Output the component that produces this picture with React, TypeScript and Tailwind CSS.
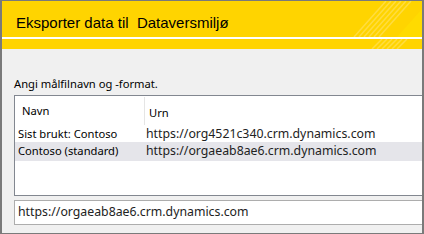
export default function App() {
  return (
    <div className="h-[234px] w-[424px] overflow-hidden bg-[#f0f0f0] font-['Noto_Sans',sans-serif]">
      <div className="flex h-full w-full flex-col border-x-2 border-y border-[#7a7a7a]">
        <div className="relative h-[48px] shrink-0 bg-[#ffd400]">
          <svg className="absolute inset-0" width="420" height="48" viewBox="0 0 420 48">
            <g stroke="#ffe680" strokeWidth="1.5" opacity="0.5">
              <line x1="352" y1="36" x2="384" y2="0" />
              <line x1="357" y1="36" x2="389" y2="0" />
              <line x1="362" y1="36" x2="394" y2="0" />
              <line x1="367" y1="36" x2="399" y2="0" />
              <line x1="372" y1="36" x2="404" y2="0" />
              <line x1="377" y1="36" x2="409" y2="0" />
              <line x1="370" y1="48" x2="380" y2="38" />
              <line x1="375" y1="48" x2="385" y2="38" />
              <line x1="380" y1="48" x2="390" y2="38" />
              <line x1="385" y1="48" x2="395" y2="38" />
              <line x1="390" y1="48" x2="400" y2="38" />
              <line x1="395" y1="48" x2="405" y2="38" />
            </g>
            <polygon points="395,36 420,8 420,36" fill="#ffe000" opacity="0.6" />
            <rect x="0" y="36" width="420" height="2" fill="#ffffff" />
          </svg>
          <div className="relative pl-[14px] pt-[12px] font-['Liberation_Sans',sans-serif] text-[15px] leading-[20px] text-black">
            Eksporter data til&nbsp; Dataversmiljø
          </div>
        </div>
        <div className="flex flex-1 flex-col pl-[12px]">
          <div className="mt-[27px] text-[11.2px] leading-[16px] text-black">Angi målfilnavn og -format.</div>
          <div className="mt-[3px] h-[101px] border border-r-0 border-[#828790] bg-white">
            <div className="flex h-[30px] text-[11.2px] text-black">
              <div className="flex w-[129px] items-center pl-[7px]">Navn</div>
              <div className="my-[1px] w-px bg-[#e5e5e5]" />
              <div className="flex items-center pt-[4px] pl-[4px]">Urn</div>
            </div>
            <div className="flex h-[16px] items-center">
              <div className="w-[131px] pl-[3px] text-[11.2px] text-black">Sist brukt: Contoso</div>
              <div className="text-[12.3px] text-[#222]">https://org4521c340.crm.dynamics.com</div>
            </div>
            <div className="flex h-[19px] items-center bg-[#e5e5ea]">
              <div className="w-[131px] pl-[3px] text-[11.2px] text-black">Contoso (standard)</div>
              <div className="text-[12.3px] text-[#222]">https://orgaeab8ae6.crm.dynamics.com</div>
            </div>
          </div>
          <div className="mt-[4px] flex h-[25px] items-center border border-r-0 border-[#adadad] bg-white pl-[3px] text-[12.3px] text-[#222]">
            https://orgaeab8ae6.crm.dynamics.com
          </div>
        </div>
      </div>
    </div>
  );
}
